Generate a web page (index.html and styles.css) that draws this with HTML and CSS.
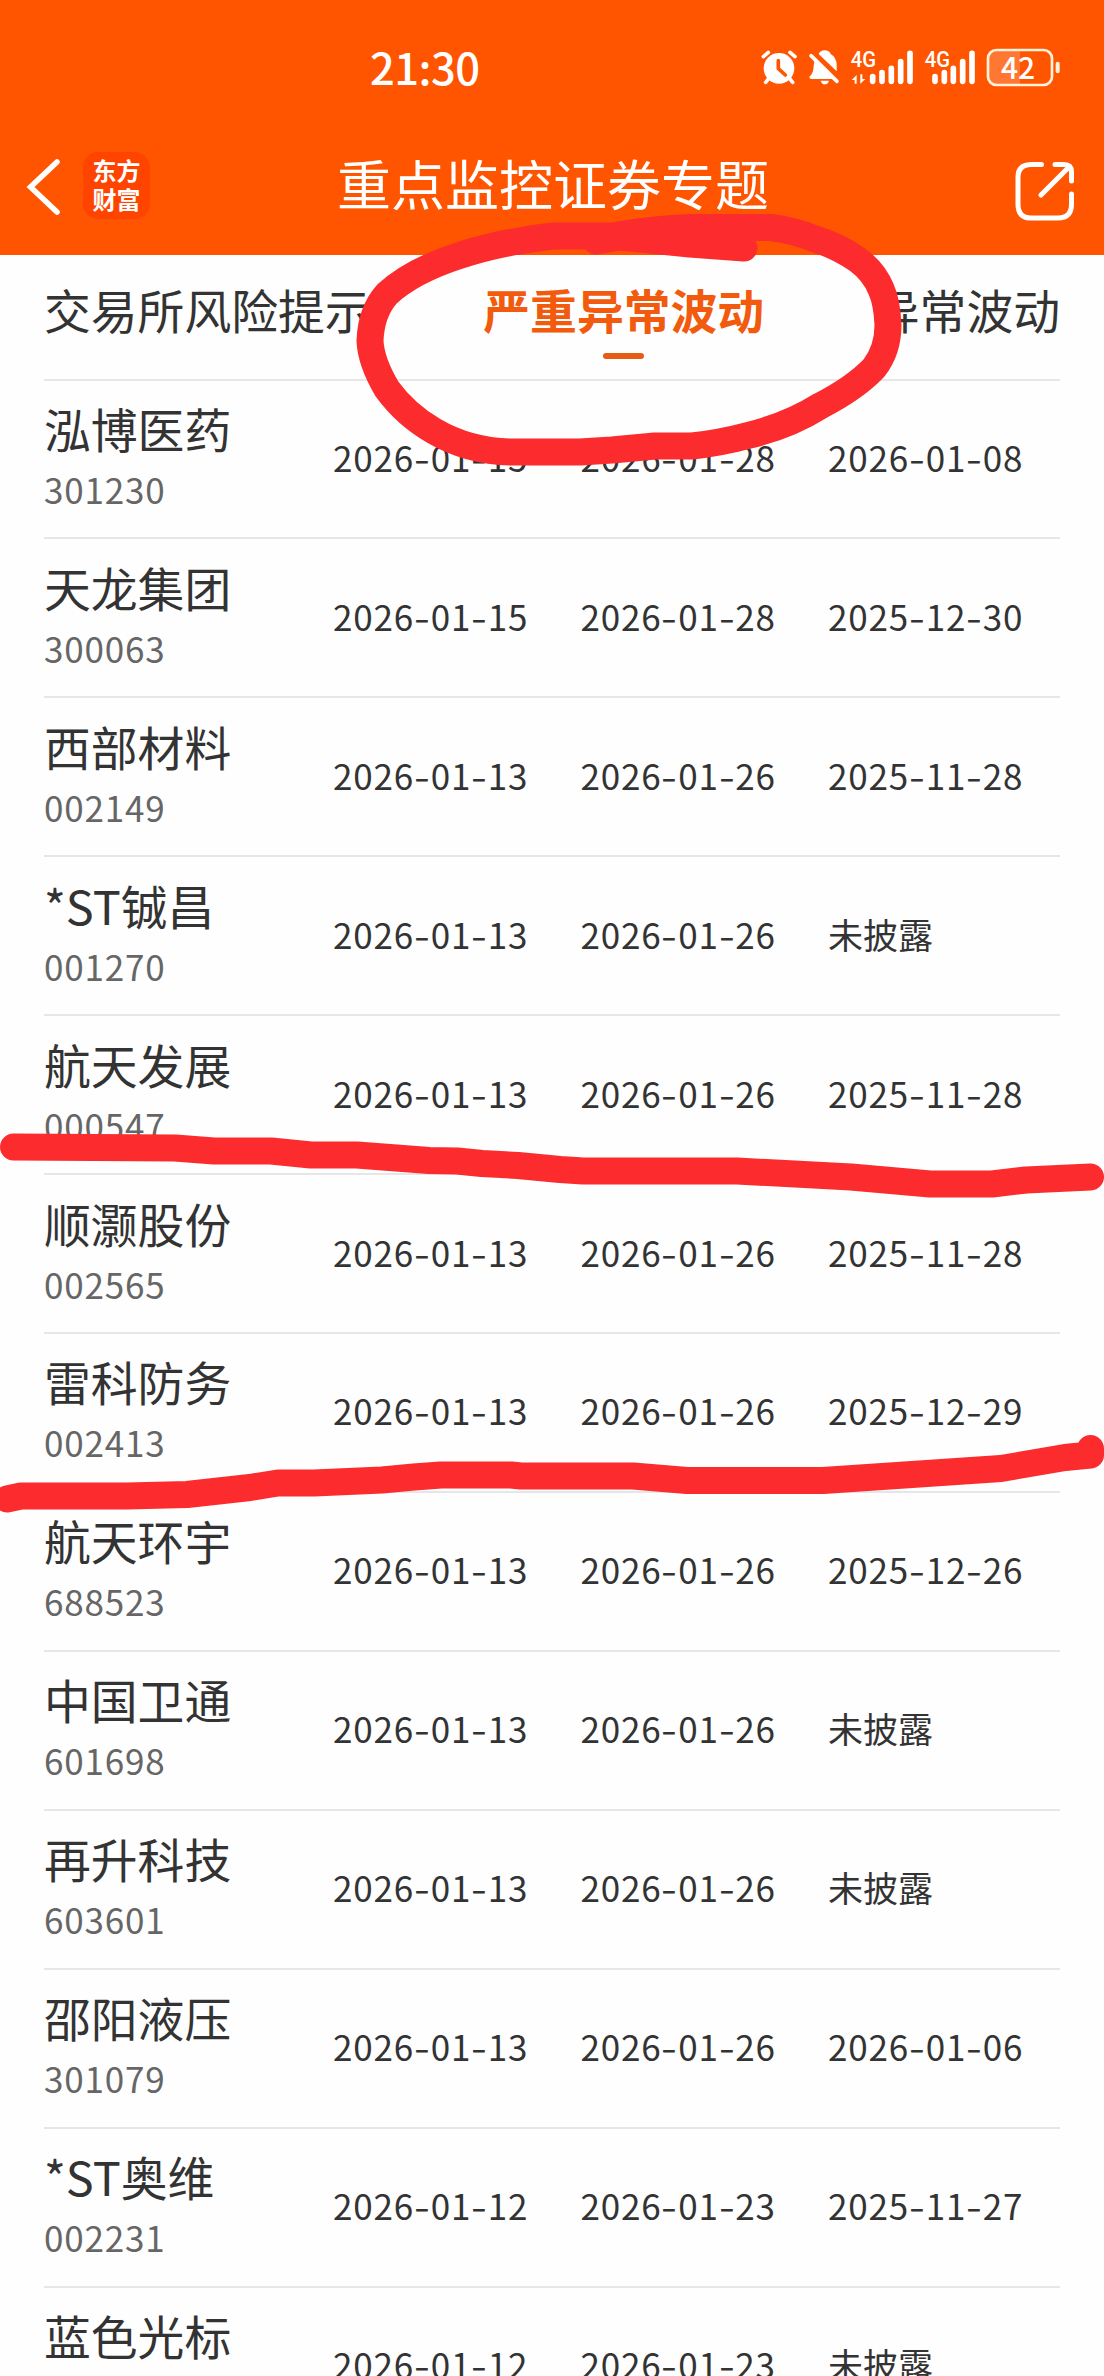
FILE: index.html
```html
<!DOCTYPE html>
<html lang="zh-CN">
<head>
    <meta charset="UTF-8" />
    <meta name="viewport" content="width=device-width, initial-scale=1.0"/>
    <title>重点监控证券专题</title>
    <link rel="stylesheet" href="styles.css">
</head>
<body>

<!-- Header -->
<header>
    <div class="status-bar">
        <span class="time">21:30</span>
        <svg class="status-icons" viewBox="0 0 1092 240">
            <!-- alarm -->
            <g fill="none" stroke="#fff" stroke-width="11" stroke-linecap="round">
                <path d="M70 80l15-13M165 80l-15-13M86 146l-9 11M149 146l9 11"/>
            </g>
            <circle cx="117" cy="115" r="46" fill="#fff"/>
            <path d="M115 92v24l21 19" fill="none" stroke="#ff5500" stroke-width="11" stroke-linecap="round" stroke-linejoin="round"/>
            <!-- muted bell -->
            <path d="M236 72q5-11 18-11q14 0 18 11q18 10 18 34v18zM223 92l56 55h-65q-8-1-5-8q12-10 12-32z" fill="#fff"/>
            <path d="M242 152h25q-3 11-13 11q-9 0-12-11z" fill="#fff"/>
            <path d="M213 77l78 77" stroke="#fff" stroke-width="11" stroke-linecap="round"/>
            <!-- signal 1 -->
            <text x="332" y="111" class="net" textLength="76" lengthAdjust="spacingAndGlyphs">4G</text>
            <path d="M350 161v-26l-15 15h9v11zM361 133v28l15-14h-9v-14z" fill="#fff"/>
            <path d="M398 140v14M426 128v26M454 115v39M482 95v59M510 70v84" stroke="#fff" stroke-width="17" stroke-linecap="round"/>
            <!-- signal 2 -->
            <text x="554" y="111" class="net" textLength="76" lengthAdjust="spacingAndGlyphs">4G</text>
            <path d="M585 140v14M613 128v26M640 115v39M668 95v59M696 70v84" stroke="#fff" stroke-width="17" stroke-linecap="round"/>
            <!-- battery -->
            <path d="M769 62h71v101h-71q-25 0-25-25v-51q0-25 25-25z" fill="#fff" opacity=".2"/>
            <rect x="744" y="60" width="192" height="105" rx="25" fill="none" stroke="#fff3dc" stroke-width="8"/>
            <path d="M953 101v23" stroke="#fff3dc" stroke-width="12" stroke-linecap="round"/>
            <text x="783" y="146" class="level">42</text>
        </svg>
    </div>
    <div class="nav-bar">
        <svg class="back" viewBox="0 0 36 60" width="36" height="60">
            <path d="M32 5L5.500 30L32 55" fill="none" stroke="#fff" stroke-width="5.500" stroke-linecap="round"/>
        </svg>
        <div class="app-logo">东方<br>财富</div>
        <h1>重点监控证券专题</h1>
        <svg class="share" viewBox="0 0 60 60" width="60" height="60">
            <path d="M26.500 3.500H16Q3 3.500 3 16.500V43Q3 57 16 57H43Q56.500 57 56.500 43V33M40 3.500H49Q56.500 3.500 56.500 11V20M26 34L54 6" fill="none" stroke="#fff" stroke-width="5" stroke-linecap="round"/>
        </svg>
    </div>
</header>

<!-- Tabs -->
<nav class="tabs">
    <a>交易所风险提示</a>
    <a class="active">严重异常波动</a>
    <a>异常波动</a>
</nav>

<!-- Stock list -->
<main id="stockList"></main>

<!-- Hand-drawn marks -->
<svg class="marks" viewBox="0 0 1104 2376" width="1104" height="2376">
    <path d="M744 248L690 244L620 237L596 241L612 236H553Q500 242 458 256Q412 271 387 294Q371 312 370 341Q371 362 387 389Q406 415 434 431Q470 452 514 452H580L612 450L655 446H692Q720 443 750 435Q790 425 820 406Q855 388 874 368Q888 350 888 325Q887 302 881 289Q874 272 858 260Q838 246 815 239Q793 230 770 227.500H692Q650 229 612 236"/>
    <path d="M13.500 1147L175 1148L214 1151L271 1151L311 1155H357L429 1160.500L457 1161L482 1163.500L518 1165.500L560 1169.500L583 1171H737L851 1177L930 1184H992L1026 1180L1090.500 1177"/>
    <path d="M7 1499L21 1496H127L187 1494.500L250 1487.500L278 1483H314L382 1480L414 1477L441 1475H511L521 1476H633L687 1480.500H823L1001 1468.500L1065 1457.500L1090.500 1455V1448.500"/>
</svg>

<script>
    const stocks = [
        ["泓博医药", "301230", "2026-01-15", "2026-01-28", "2026-01-08"],
        ["天龙集团", "300063", "2026-01-15", "2026-01-28", "2025-12-30"],
        ["西部材料", "002149", "2026-01-13", "2026-01-26", "2025-11-28"],
        ["*ST铖昌", "001270", "2026-01-13", "2026-01-26", "未披露"],
        ["航天发展", "000547", "2026-01-13", "2026-01-26", "2025-11-28"],
        ["顺灏股份", "002565", "2026-01-13", "2026-01-26", "2025-11-28"],
        ["雷科防务", "002413", "2026-01-13", "2026-01-26", "2025-12-29"],
        ["航天环宇", "688523", "2026-01-13", "2026-01-26", "2025-12-26"],
        ["中国卫通", "601698", "2026-01-13", "2026-01-26", "未披露"],
        ["再升科技", "603601", "2026-01-13", "2026-01-26", "未披露"],
        ["邵阳液压", "301079", "2026-01-13", "2026-01-26", "2026-01-06"],
        ["*ST奥维", "002231", "2026-01-12", "2026-01-23", "2025-11-27"],
        ["蓝色光标", "300058", "2026-01-12", "2026-01-23", "未披露"]
    ];

    // dashes are drawn a little wider than the font has them
    function dateCell(text) {
        const cls = text.includes("-") ? "date" : "date none";
        return `<span class="${cls}">${text.replace(/-/g, "<i>-</i>")}</span>`;
    }

    document.getElementById("stockList").innerHTML = stocks.map(s => `
        <div class="row">
            <div class="stock">
                <span class="name">${s[0]}</span>
                <span class="code">${s[1]}</span>
            </div>
            ${dateCell(s[2])}${dateCell(s[3])}${dateCell(s[4])}
        </div>`).join("");
</script>

</body>
</html>
```

FILE: styles.css
```css
body {
    position: relative;
    width: 1104px;
    height: 2376px;
    margin: 0;
    overflow: hidden;
    background: #fefefe;
    color: #333;
    font-family: "Noto Sans CJK SC", sans-serif;
}

header {
    height: 254.5px;
    background: #ff5500;
    color: #fff;
}

.status-bar {
    display: flex;
    justify-content: space-between;
    height: 110px;
    padding: 30px 0 0 370px;
    box-sizing: border-box;
}

.time {
    font-size: 43.5px;
    font-weight: 500;
    line-height: 73px;
    letter-spacing: -0.5px;
}

.status-icons {
    width: 364px;
    height: 80px;
}

.net {
    font-family: Roboto, sans-serif;
    font-size: 67px;
    font-weight: 500;
    fill: #fff;
}

.level {
    font-size: 90px;
    font-weight: 500;
    fill: #fff;
}

.nav-bar {
    display: flex;
    align-items: center;
    height: 144px;
    padding: 5px 29px 0 25px;
    box-sizing: border-box;
}

.back {
    margin-top: 5px;
}

.app-logo {
    width: 67px;
    height: 67px;
    margin: 1px 0 0 22px;
    border-radius: 15px;
    background: #ff4400;
    font-size: 24px;
    font-weight: 700;
    line-height: 29px;
    text-align: center;
    padding-top: 3px;
    box-sizing: border-box;
}

h1 {
    flex: 1;
    margin: 0 0 4px 187px;
    font-size: 54px;
    font-weight: 400;
    line-height: 70px;
    white-space: nowrap;
}

.share {
    margin-top: 13px;
}

.tabs {
    display: flex;
    justify-content: space-between;
    height: 124px;
    margin: 0 44px;
    border-bottom: 2px solid #e6e6e6;
}

.tabs a {
    font-size: 46.8px;
    line-height: 108px;
}

.tabs .active {
    position: relative;
    color: #f25a0e;
    font-weight: 700;
    margin-right: -3px;
}

.tabs .active::after {
    content: "";
    position: absolute;
    left: 50%;
    top: 98px;
    width: 41px;
    height: 6px;
    margin-left: -20.5px;
    border-radius: 3px;
    background: #e65c14;
}

main {
    margin: 0 44px;
}

.row {
    display: grid;
    grid-template-columns: 289px 247.5px 247.5px 1fr;
    align-items: center;
    height: 158.93px;
    padding-bottom: 4px;
    box-sizing: border-box;
    border-bottom: 2px solid #e6e6e6;
}

.stock {
    display: flex;
    flex-direction: column;
    margin-top: -2px;
}

.name {
    font-size: 46.8px;
    line-height: 66px;
}

.code {
    color: #666;
    font-size: 35px;
    line-height: 56px;
    letter-spacing: 0.8px;
}

.date {
    font-size: 35px;
    line-height: 50px;
    letter-spacing: 0.8px;
}

.date i {
    display: inline-block;
    padding: 0 2px;
    font-style: normal;
    letter-spacing: 0.6px;
    transform: scaleX(1.3);
}

.none {
    letter-spacing: 0;
}

/* red marker strokes over the page */
.marks {
    position: absolute;
    left: 0;
    top: 0;
    fill: none;
    stroke: #fc2b2d;
    stroke-width: 27;
    stroke-linecap: round;
    stroke-linejoin: round;
}
```
